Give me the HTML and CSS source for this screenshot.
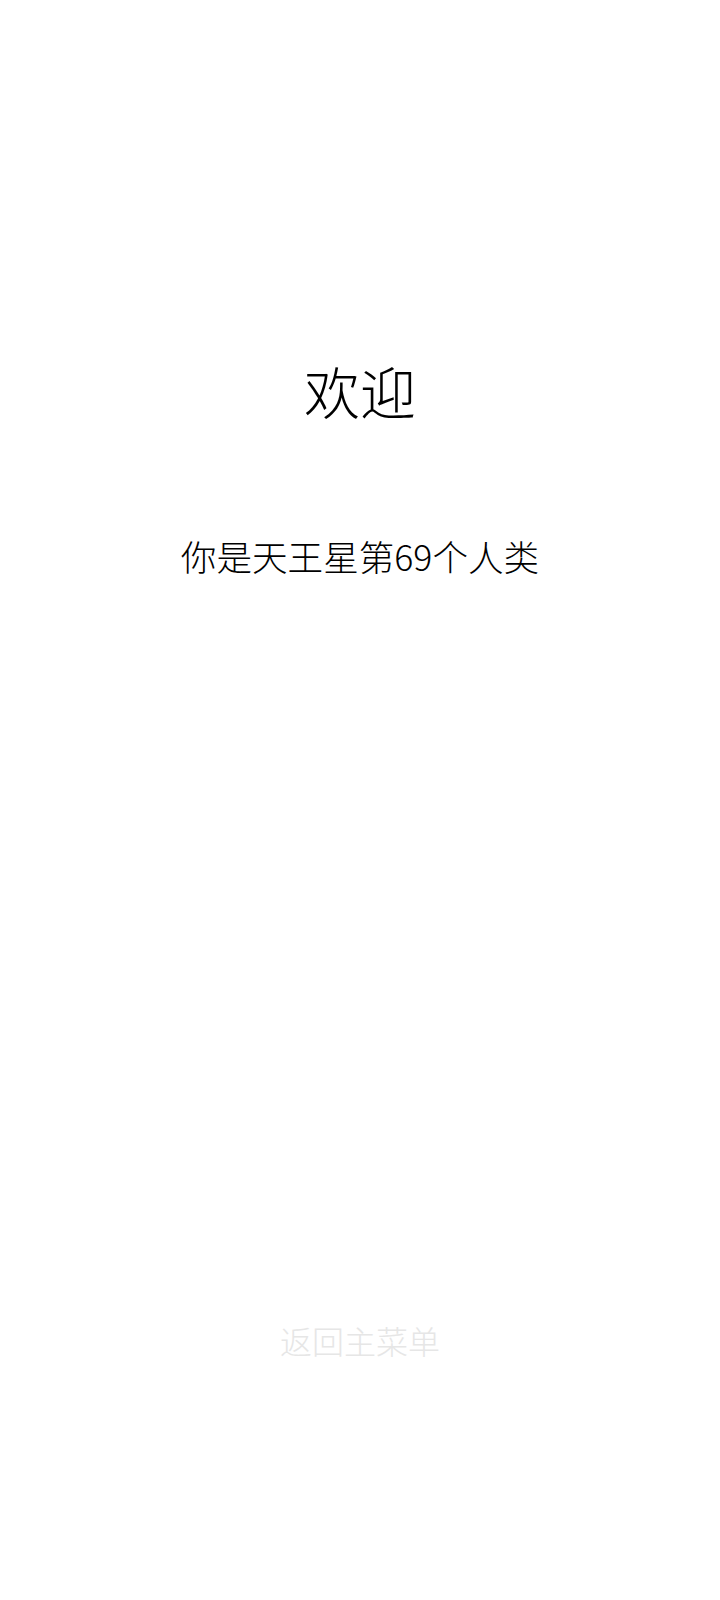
FILE: index.html
```html
<!DOCTYPE html>
<html lang="zh-CN">
<head>
<meta charset="utf-8">
<link rel="stylesheet" href="styles.css">
</head>
<body>
<main class="screen">
  <h1 class="title">欢迎</h1>
  <p class="subtitle">你是天王星第69个人类</p>
  <div class="spacer"></div>
  <p class="back">返回主菜单</p>
</main>
</body>
</html>
```

FILE: styles.css
```css
html, body {
  margin: 0;
  padding: 0;
  background: #ffffff;
}
.screen {
  width: 720px;
  height: 1600px;
  display: flex;
  flex-direction: column;
  align-items: center;
  font-family: "Noto Sans CJK SC", "Noto Sans", sans-serif;
  font-weight: 300;
  color: #000000;
  box-sizing: border-box;
  padding-top: 352px;
}
.title {
  margin: 0;
  font-size: 56px;
  font-weight: 300;
  line-height: 76px;
}
.subtitle {
  margin: 101px 0 0 0;
  font-size: 35.6px;
  line-height: 54px;
  font-weight: 300;
}
.spacer {
  flex: 1;
}
.back {
  margin: 0 0 238px 0;
  font-size: 32px;
  line-height: 44px;
  color: #e6e6e6;
}
```
